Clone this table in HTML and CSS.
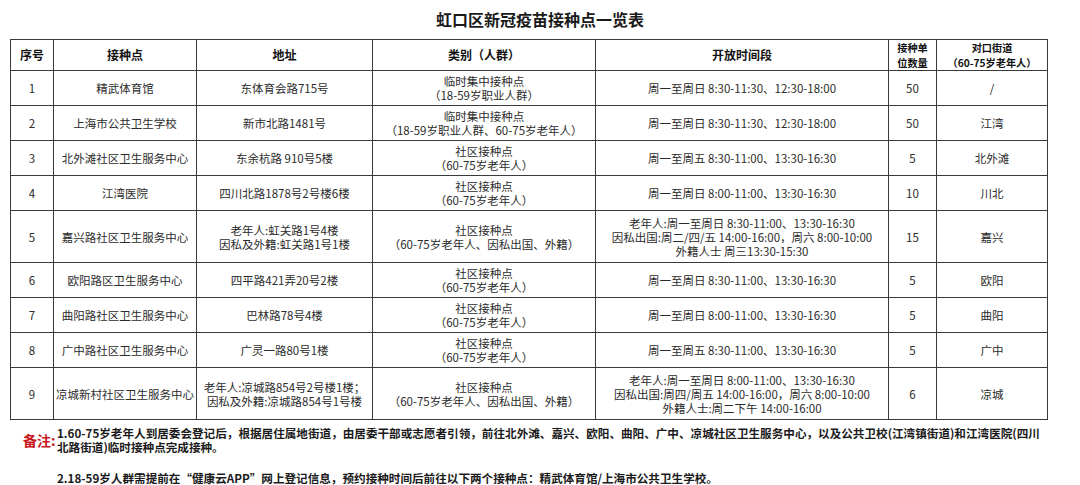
FILE: index.html
```html
<!DOCTYPE html>
<html lang="zh-CN">
<head>
<meta charset="utf-8">
<title>虹口区新冠疫苗接种点一览表</title>
<link rel="stylesheet" href="styles.css">
</head>
<body>
<div class="page">
  <h1 class="title">虹口区新冠疫苗接种点一览表</h1>
  <table class="sheet">
    <colgroup>
      <col class="c-no"><col class="c-site"><col class="c-addr"><col class="c-type"><col class="c-time"><col class="c-qty"><col class="c-street">
    </colgroup>
    <thead>
      <tr class="r-head">
        <th>序号</th><th>接种点</th><th>地址</th><th>类别（人群）</th><th>开放时间段</th><th class="tight">接种单<br>位数量</th><th class="tight">对口街道<br>（60-75岁老年人）</th>
      </tr>
    </thead>
    <tbody>
      <tr class="r-std">
        <td>1</td><td>精武体育馆</td><td>东体育会路715号</td><td>临时集中接种点<br>（18-59岁职业人群）</td><td>周一至周日 8:30-11:30、12:30-18:00</td><td>50</td><td>/</td>
      </tr>
      <tr class="r-std">
        <td>2</td><td>上海市公共卫生学校</td><td>新市北路1481号</td><td>临时集中接种点<br>（18-59岁职业人群、60-75岁老年人）</td><td>周一至周日 8:30-11:30、12:30-18:00</td><td>50</td><td>江湾</td>
      </tr>
      <tr class="r-std">
        <td>3</td><td>北外滩社区卫生服务中心</td><td>东余杭路 910号5楼</td><td>社区接种点<br>（60-75岁老年人）</td><td>周一至周五 8:30-11:00、13:30-16:30</td><td>5</td><td>北外滩</td>
      </tr>
      <tr class="r-std">
        <td>4</td><td>江湾医院</td><td>四川北路1878号2号楼6楼</td><td>社区接种点<br>（60-75岁老年人）</td><td>周一至周日 8:00-11:00、13:30-16:30</td><td>10</td><td>川北</td>
      </tr>
      <tr class="r-tall">
        <td>5</td><td>嘉兴路社区卫生服务中心</td><td>老年人:虹关路1号4楼<br>因私及外籍:虹关路1号1楼</td><td>社区接种点<br>（60-75岁老年人、因私出国、外籍）</td><td>老年人:周一至周日 8:30-11:00、13:30-16:30<br>因私出国:周二/四/五 14:00-16:00，周六 8:00-10:00<br>外籍人士 周三13:30-15:30</td><td>15</td><td>嘉兴</td>
      </tr>
      <tr class="r-std">
        <td>6</td><td>欧阳路区卫生服务中心</td><td>四平路421弄20号2楼</td><td>社区接种点<br>（60-75岁老年人）</td><td>周一至周日 8:30-11:00、13:30-16:30</td><td>5</td><td>欧阳</td>
      </tr>
      <tr class="r-std">
        <td>7</td><td>曲阳路社区卫生服务中心</td><td>巴林路78号4楼</td><td>社区接种点<br>（60-75岁老年人）</td><td>周一至周日 8:00-11:00、13:30-16:30</td><td>5</td><td>曲阳</td>
      </tr>
      <tr class="r-std">
        <td>8</td><td>广中路社区卫生服务中心</td><td>广灵一路80号1楼</td><td>社区接种点<br>（60-75岁老年人）</td><td>周一至周五 8:30-11:00、13:30-16:30</td><td>5</td><td>广中</td>
      </tr>
      <tr class="r-tall">
        <td>9</td><td class="nowrap">凉城新村社区卫生服务中心</td><td>老年人:凉城路854号2号楼1楼；<br>因私及外籍:凉城路854号1号楼</td><td>社区接种点<br>（60-75岁老年人、因私出国、外籍）</td><td>老年人:周一至周日 8:00-11:00、13:30-16:30<br>因私出国:周四/周五 14:00-16:00，周六 8:00-10:00<br>外籍人士:周二下午 14:00-16:00</td><td>6</td><td>凉城</td>
      </tr>
    </tbody>
  </table>
  <div class="notes">
    <div class="notes-label">备注:</div>
    <p class="note">1.60-75岁老年人到居委会登记后，根据居住属地街道，由居委干部或志愿者引领，前往北外滩、嘉兴、欧阳、曲阳、广中、凉城社区卫生服务中心，以及公共卫校(江湾镇街道)和江湾医院(四川<br>北路街道)临时接种点完成接种。</p>
    <p class="note note-2">2.18-59岁人群需提前在“健康云APP”网上登记信息，预约接种时间后前往以下两个接种点：精武体育馆/上海市公共卫生学校。</p>
  </div>
</div>
</body>
</html>
```

FILE: styles.css
```css
* { box-sizing: border-box; }
html, body {
  margin: 0;
  padding: 0;
  background: #ffffff;
}
body {
  width: 1080px;
  height: 485px;
  overflow: hidden;
  font-family: "Noto Sans CJK SC", "Noto Sans", sans-serif;
  color: #2b2b2b;
}
.page {
  padding: 0 0 0 10px;
}
.title {
  margin: 0;
  height: 39px;
  line-height: 38px;
  text-align: center;
  font-size: 16px;
  font-weight: 700;
  color: #1a1a1a;
  padding-right: 10px;
}
.sheet {
  width: 1037px;
  border-collapse: collapse;
  table-layout: fixed;
  font-size: 11.5px;
  line-height: 14px;
}
.c-no { width: 43px; }
.c-site { width: 143px; }
.c-addr { width: 176px; }
.c-type { width: 223px; }
.c-time { width: 293px; }
.c-qty { width: 48px; }
.c-street { width: 111px; }
.sheet th,
.sheet td {
  border: 1px solid #3a3a3a;
  text-align: center;
  vertical-align: middle;
  padding: 0 1px;
  white-space: nowrap;
  overflow: hidden;
}
.sheet th {
  font-weight: 700;
  color: #111;
  font-size: 12px;
}
.sheet th.tight {
  font-size: 10.2px;
  line-height: 15px;
}
.r-head { height: 30px; }
.r-std { height: 35px; }
.r-tall { height: 52px; }
.nowrap { text-align: left; padding-left: 2px; }
.notes {
  display: grid;
  grid-template-columns: 47px 1fr;
  padding-top: 6px;
  font-size: 11.6px;
  font-weight: 700;
  color: #1a1a1a;
}
.notes-label {
  grid-row: 1;
  grid-column: 1;
  align-self: center;
  padding-left: 13px;
  color: #c8171d;
  font-size: 14px;
  line-height: 16px;
  font-weight: 700;
}
.note {
  grid-column: 2;
  margin: 0;
  line-height: 14px;
  white-space: nowrap;
}
.note-2 {
  margin-top: 17px;
}
```
